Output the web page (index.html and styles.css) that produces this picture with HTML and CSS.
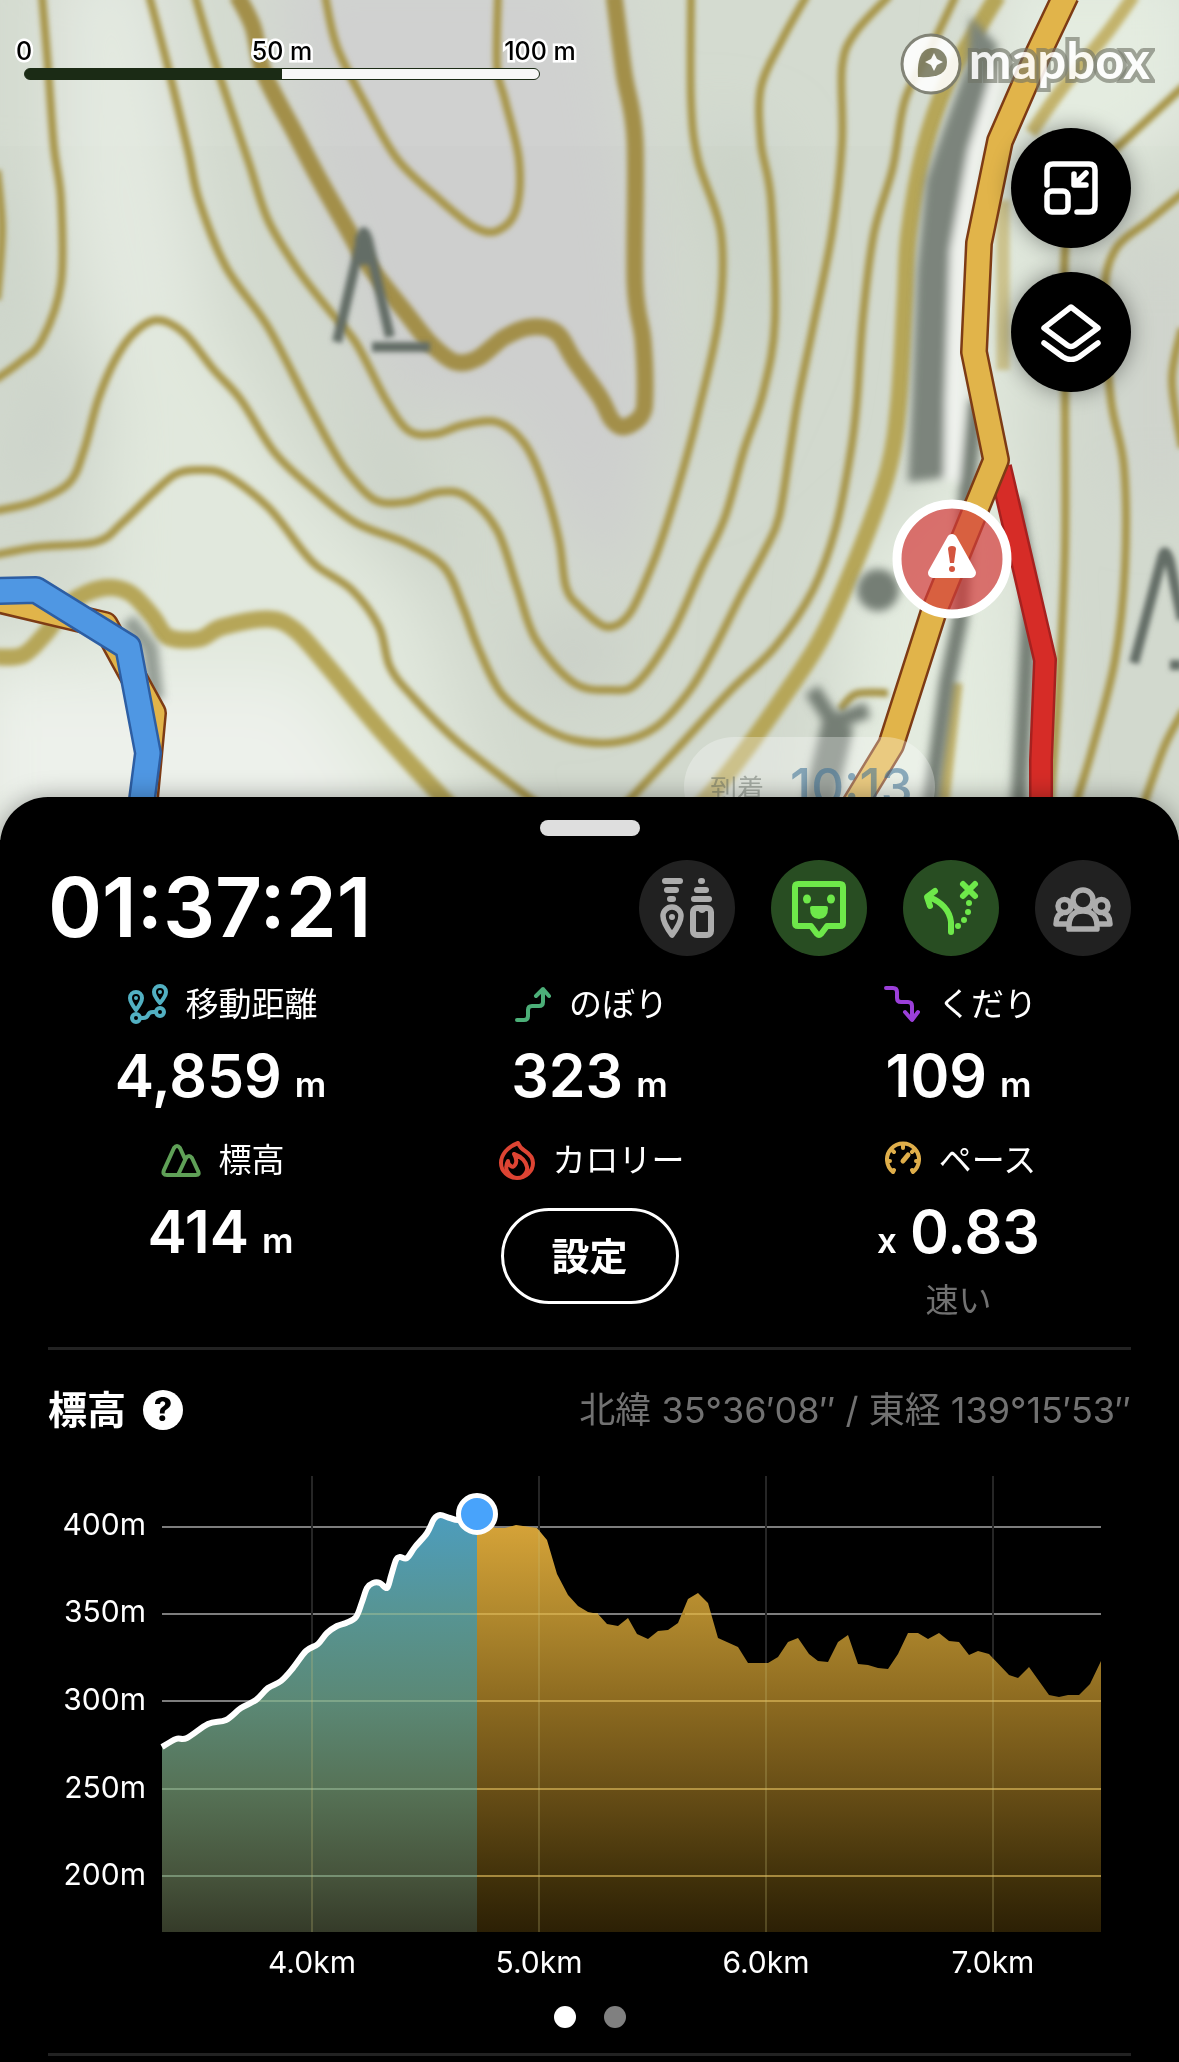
FILE: index.html
```html
<!DOCTYPE html>
<html lang="ja">
<head>
<meta charset="utf-8">
<meta name="viewport" content="width=device-width, initial-scale=1">
<title>活動記録</title>
<link rel="stylesheet" href="styles.css">
</head>
<body>
<main class="app">
  <section class="map" aria-label="地図">
    <svg class="map-art" viewBox="0 0 1179 840" preserveAspectRatio="xMidYMin slice" aria-hidden="true">
      <defs>
        <filter id="soft" x="-10%" y="-10%" width="120%" height="120%"><feGaussianBlur stdDeviation="2.500"/></filter>
        <filter id="softer" x="-10%" y="-10%" width="120%" height="120%"><feGaussianBlur stdDeviation="4"/></filter>
        <filter id="wash" x="-30%" y="-30%" width="160%" height="160%"><feGaussianBlur stdDeviation="32"/></filter>
      </defs>
      <rect width="1179" height="840" fill="#d2d9ce"/>
      <g filter="url(#wash)">
        <path d="M60 -40H150L190 200L230 420L110 420L60 200Z" fill="#e3e9e0"/>
        <path d="M-40 190H30V350L-40 400Z" fill="#cdd5ca"/>
        <path d="M110 340L200 300L300 480L420 600L500 860L-40 860L-40 640L100 620Z" fill="#e1e8dd"/>
        <path d="M-20 680H300L420 860H-20Z" fill="#edf1eb"/>
        <path d="M270 -40H600L650 260L660 420L620 600L560 520L500 420L380 400L300 160Z" fill="#cecfce"/>
        <path d="M30 400L90 330L100 420L60 480L-20 490Z" fill="#ccd3ca"/>
        <path d="M520 620L640 640L560 700Z" fill="#c6cbc4"/>
        <path d="M360 380L420 480L460 600L370 500Z" fill="#c9d0c6"/>
        <path d="M690 120L770 140L780 320L700 500L730 300Z" fill="#c9d1c6"/>
        <path d="M1000 -40H1200V120L1060 200L1010 400L1040 860H830L850 560L940 480L980 200Z" fill="#e3ebdf"/>
        <path d="M1120 240H1200V500H1120Z" fill="#cfd3cc"/>
      </g>
      <rect width="1179" height="146" fill="#fff" opacity=".06"/>
      <g class="contour" filter="url(#soft)">
        <path data-points="325,-5 337,47 367,107 398,160 440,200 474,227 497,231 516,210 519,160 505,100 497,67 498,-5"/>
        <path data-points="195,-5 209,43 230,107 249,163 268,220 298,270 329,310 356,343 386,400 409,431 436,434 463,425 497,422 524,443 543,483 559,540 566,587 580,607 607,627 630,613 653,563 668,520 683,470 698,413 719,317 721,233 698,160 691,100 691,-5"/>
        <path data-points="149,-5 168,67 188,150 199,200 226,267 268,327 306,400 329,443 348,473 375,500 406,502 440,492 467,497 497,530 517,587 536,640 574,683 611,690 637,683 672,633 702,567 725,517 744,450 763,393 775,320 771,200 761,143 761,87 782,40 807,-5"/>
        <path data-points="-5,511 34,502 69,483 84,450 98,400 115,360 134,333 157,320 184,333 214,370 241,400 275,453 314,490 356,523 406,543 444,567 463,607 478,647 501,693 536,723 574,740 618,742 656,727 690,690 715,647 740,597 765,550 779,517 790,450 798,400 813,327 832,233 842,143 842,67 855,33 890,-5"/>
        <path data-points="-5,555 38,547 96,542 122,523 153,493 176,474 199,470 226,475 268,507 302,550 318,567 352,590 379,627 390,667 413,697 459,743 540,806"/>
        <path data-points="620,810 676,750 729,692 775,647 813,590 836,527 851,450 857,400 863,317 874,233 893,167 905,100 930,50 956,-5"/>
        <path data-points="42,-5 48,67 54,147 61,200 61,283 42,340 20,362 -5,380"/>
        <path data-points="-3,170 2,230 -3,300"/>
        <path data-points="1184,86 1122,143 1080,180 1065,250 1065,400 1065,550 1058,700 1050,806"/>
        <path data-points="1184,192 1150,220 1115,250 1104,300 1111,400 1124,467 1125,567 1115,660 1092,750 1075,806"/>
        <path data-points="1182,328 1172,380 1182,448"/>
        <path data-points="1184,710 1165,745 1143,806"/>
        <path data-points="840,710 856,694 888,693"/>
      </g>
      <g class="index-contour" filter="url(#soft)">
        <path data-points="237,-5 253,27 264,73 295,133 318,177 348,230 367,263 406,313 430,343 455,362 478,358 505,337 532,327 557,333 574,360 600,397 612,420 624,427 641,416 645,395 643,340 635,283 635,140 624,73 614,-5"/>
        <path class="low" data-points="-5,657 23,655 46,633 70,603 103,588 130,593 153,617 168,637 199,639 222,627 268,619 295,630 325,663 383,733 450,806"/>
        <path class="low" data-points="700,806 733,767 786,693 824,633 863,543 889,467 899,400 905,300 909,233 924,150 947,83 980,25 998,-5"/>
        <path class="tan" data-points="1134,-5 1107,33 1061,90 1031,133"/>
        <path class="tan faint" d="M1003 200V370"/>
        <path class="tan" d="M956 683L943 800"/>
      </g>
      <g class="road" filter="url(#softer)">
        <path class="verge" d="M990 70L966 167L955 250L950 400L945 480"/>
        <path class="body" d="M970 16L998 46L986 90L968 150L950 250L945 400L944 478L908 482L912 400L917 270L926 180L943 130L968 62Z"/>
        <path class="narrow" d="M976 400L966 500L960 620L947 683L928 820"/>
        <path class="narrow" d="M1014 500L1030 590L1027 650L1018 820"/>
        <path class="narrow" d="M812 690L833 722L868 710"/>
        <path class="wide" d="M838 724L815 820"/>
        <path class="narrow faint" d="M128 620L150 648L156 700"/>
        <circle cx="878" cy="590" r="21"/>
      </g>
      <g class="tree" filter="url(#soft)">
        <path d="M337 342L361 240Q363 224 368 240L390 337M372 347H430"/>
        <path class="tip" d="M363 236V265"/>
        <path d="M1134 663L1162 558Q1165 545 1170 562L1182 620M1170 665H1182"/>
      </g>
      <g class="route">
        <path class="orange-edge" d="M0 600L105 625L153 713L142 830"/>
        <path class="orange" d="M0 600L105 625L153 713L142 830"/>
        <path class="red-edge" d="M1000 467L1045 660L1041 760V830"/>
        <path class="red" d="M1000 467L1045 660L1041 760V830"/>
        <path class="orange-edge" d="M1066 -5L1038 54L1000 141L979 243L974 352L996 460L933 614L891 745L838 832"/>
        <path class="orange" d="M1066 -5L1038 54L1000 141L979 243L974 352L996 460L933 614L891 745L838 832"/>
        <path class="blue-edge" d="M-5 591L36 590L128 647L148 753L138 830"/>
        <path class="blue" d="M-5 591L36 590L128 647L148 753L138 830"/>
      </g>
      <g>
        <circle cx="952" cy="559" r="55" fill="#d43c3c" fill-opacity=".7" stroke="#fff" stroke-width="9"/>
        <path d="M952 539L971 573H933Z" fill="#fff" stroke="#fff" stroke-width="10" stroke-linejoin="round"/>
        <path d="M948 549Q948 546 952 546T956 549L954 563H950Z" fill="#d4553f"/><circle cx="952" cy="569" r="3" fill="#d4553f"/>
      </g>
    </svg>
    <div class="scale">
      <div class="scale-labels"><span>0</span><span>50 m</span><span>100 m</span></div>
      <div class="scale-bar"></div>
    </div>
    <a class="mapbox" href="#" aria-label="mapbox">
      <svg viewBox="0 0 64 64" width="64" height="64" aria-hidden="true">
        <circle cx="32" cy="32" r="29" fill="#fff" stroke="#77786b" stroke-width="3"/>
        <path d="M19 45C18 25 23 16 34 16A14 14 0 0 1 48 30C48 42 38 46 19 45Z" fill="#7c7c62"/>
        <path d="M35 21L38 27L44 30L38 33L35 39L32 33L26 30L32 27Z" fill="#fff"/>
      </svg>
      <span>mapbox</span>
    </a>
    <div class="map-buttons">
      <button class="map-button" type="button" aria-label="縮小表示">
        <svg viewBox="0 0 60 60" width="60" height="60"><g fill="none" stroke="#fff" stroke-width="5.500" stroke-linecap="round" stroke-linejoin="round"><path d="M6 27V12Q6 6 12 6H48Q54 6 54 12V48Q54 54 48 54H36"/><rect x="6" y="33" width="21" height="21" rx="5"/><path d="M33 16V27H45M34 26L45 15"/></g></svg>
      </button>
      <button class="map-button" type="button" aria-label="地図の種類">
        <svg viewBox="0 0 60 60" width="60" height="60"><g fill="none" stroke="#fff" stroke-width="5.500" stroke-linecap="round" stroke-linejoin="round"><path d="M30 5L57 26L34 43Q30 46 26 43L3 26Z"/><path d="M3 41L22 55Q30 60 38 55L57 41"/></g></svg>
      </button>
    </div>
    <div class="arrival"><span>到着</span><strong>10:13</strong></div>
  </section>

  <section class="sheet">
    <div class="handle"></div>
    <header class="top-row">
      <h1 class="timer">01:37:21</h1>
      <div class="toggles">
        <button class="toggle" type="button" aria-label="位置共有">
          <svg viewBox="0 0 96 96"><g fill="none" stroke="currentColor" stroke-width="6" stroke-linecap="round" stroke-linejoin="round"><path d="M26 21H41M28 30H37M31 39H34M62 21H63M58 30H67M55 39H70"/><path d="M33 75Q24 63 24 56A9 9 0 0 1 42 56Q42 63 33 75Z" stroke-width="5.500"/><rect x="54" y="48" width="18" height="27" rx="4"/></g><circle cx="33" cy="57" r="3" fill="currentColor"/><path d="M59 50H67Q66 53 63 53T59 50Z" fill="currentColor"/></svg>
        </button>
        <button class="toggle on" type="button" aria-label="フィールドメモ">
          <svg viewBox="0 0 96 96"><path d="M27 24H69Q72 24 72 27V63Q72 66 69 66H56L50 74Q48 76 46 74L40 66H27Q24 66 24 63V27Q24 24 27 24Z" fill="none" stroke="currentColor" stroke-width="6" stroke-linejoin="round"/><ellipse cx="36" cy="39" rx="4" ry="4.500" fill="currentColor"/><ellipse cx="60" cy="39" rx="4" ry="4.500" fill="currentColor"/><path d="M41 46H55Q57 46 57 48Q57 59 48 59T39 48Q39 46 41 46Z" fill="currentColor"/></svg>
        </button>
        <button class="toggle on" type="button" aria-label="ルート外れ警告">
          <svg viewBox="0 0 96 96"><g fill="none" stroke="currentColor" stroke-width="6" stroke-linecap="round" stroke-linejoin="round"><path d="M48 72V62Q46 45 26 37M32 31L24 37L27 46"/><path d="M60 24L72 36M72 24L60 36"/></g><g fill="currentColor"><circle cx="66" cy="43" r="3"/><circle cx="65" cy="52" r="3"/><circle cx="61" cy="60" r="3"/><circle cx="55" cy="66" r="3"/></g></svg>
        </button>
        <button class="toggle" type="button" aria-label="グループ">
          <svg viewBox="0 0 96 96"><g fill="none" stroke="currentColor" stroke-width="5.500" stroke-linejoin="round"><circle cx="48" cy="40" r="10"/><circle cx="29.500" cy="46" r="6.500"/><circle cx="66.500" cy="46" r="6.500"/><path d="M34 69Q33 51 48 51T62 69Z"/><path d="M33 64H21Q21 54 28 53M63 64H75Q75 54 68 53"/></g></svg>
        </button>
      </div>
    </header>

    <dl class="metrics">
      <div class="metric">
        <dt><svg viewBox="0 0 40 40" width="40" height="40" fill="none" stroke="#52b0c2" stroke-width="4"><path d="M8 26Q2 18 2 14A6 6 0 0 1 14 14Q14 18 8 26ZM32 19Q26 12 26 8A6 6 0 0 1 38 8Q38 12 32 19Z" stroke-linejoin="round"/><circle cx="8" cy="34" r="4"/><circle cx="32" cy="28" r="4"/><path d="M12 34H15Q19 34 20 31T25 28H28"/><circle cx="8" cy="14" r="2" fill="#52b0c2" stroke="none"/><circle cx="32" cy="8" r="2" fill="#52b0c2" stroke="none"/></svg>移動距離</dt>
        <dd>4,859<small>m</small></dd>
      </div>
      <div class="metric">
        <dt><svg viewBox="0 0 36 40" width="36" height="40" fill="none" stroke="#4caf78" stroke-width="4" stroke-linecap="round" stroke-linejoin="round"><path d="M2 36H9Q13 36 13 32V26Q13 22 17 22H24Q28 22 28 18V5M21 12L28 5L34 12"/></svg>のぼり</dt>
        <dd>323<small>m</small></dd>
      </div>
      <div class="metric">
        <dt><svg viewBox="0 0 36 40" width="36" height="40" fill="none" stroke="#9b3fd9" stroke-width="4" stroke-linecap="round" stroke-linejoin="round"><path d="M2 4H9Q13 4 13 8V14Q13 18 17 18H24Q28 18 28 22V35M21 28L28 36L34 28"/></svg>くだり</dt>
        <dd>109<small>m</small></dd>
      </div>
      <div class="metric">
        <dt><svg viewBox="0 0 40 40" width="40" height="40" fill="none" stroke="#5fa057" stroke-width="4" stroke-linejoin="round" stroke-linecap="round"><path d="M6 35Q1 35 3 30L13 8Q16 4 19 8L24 19M6 35H35Q39 35 37 31L31 18Q28 14 25 18L17 35"/></svg>標高</dt>
        <dd>414<small>m</small></dd>
      </div>
      <div class="metric">
        <dt><svg viewBox="0 0 36 40" width="36" height="40" fill="none" stroke="#dd4433" stroke-width="4" stroke-linejoin="round" stroke-linecap="round"><path d="M19 3C8 7 2 15 2 23A16 15 0 0 0 34 23C34 16 29 13 26 11Q21 8 19 3Z"/><path d="M23 37Q29 32 28 27Q26 18 15 14Q19 21 16 25Q14 28 12 26Q9 25 9 21Q6 26 8 31Q10 35 14 37"/></svg>カロリー</dt>
        <dd><button class="setup" type="button">設定</button></dd>
      </div>
      <div class="metric">
        <dt><svg viewBox="0 0 36 40" width="36" height="40" fill="none" stroke="#dfae4a" stroke-width="4" stroke-linecap="round" stroke-linejoin="round"><path d="M8 32A16 16 0 1 1 28 32L27 30M8 32L9 30M3 21H5M33 21H31M18 6V8M8 11L9 12M28 11L27 12"/><path d="M18 21L23 15" stroke-width="5"/></svg>ペース</dt>
        <dd><small>x</small>0.83</dd>
        <dd class="note">速い</dd>
      </div>
    </dl>

    <section class="elevation">
      <header class="elevation-head">
        <h2>標高</h2>
        <button class="help" type="button" aria-label="ヘルプ">?</button>
        <p>北緯 35°36′08″ / 東経 139°15′53″</p>
      </header>
      <div class="chart">
        <div class="y-axis"><span>400m</span><span>350m</span><span>300m</span><span>250m</span><span>200m</span></div>
        <div class="plot">
          <svg viewBox="0 0 939 456" preserveAspectRatio="none" role="img" aria-label="標高グラフ">
            <defs>
              <linearGradient id="done" gradientUnits="userSpaceOnUse" x1="0" y1="40" x2="0" y2="456"><stop offset="0" stop-color="#4d9dbd"/><stop offset=".24" stop-color="#579492"/><stop offset=".45" stop-color="#5b8875"/><stop offset=".66" stop-color="#567256"/><stop offset=".87" stop-color="#46533b"/><stop offset="1" stop-color="#353b29"/></linearGradient>
              <linearGradient id="ahead" gradientUnits="userSpaceOnUse" x1="0" y1="40" x2="0" y2="456"><stop offset="0" stop-color="#d8a539"/><stop offset=".24" stop-color="#b0882d"/><stop offset=".45" stop-color="#8c6a20"/><stop offset=".66" stop-color="#684e16"/><stop offset=".87" stop-color="#41310a"/><stop offset="1" stop-color="#2c2005"/></linearGradient>
            </defs>
            <path class="rows" d="M0 51H939M0 138H939M0 225H939"/>
            <path class="cols" d="M150 0V456M377 0V456M604 0V456M831 0V456"/>
            <path fill="url(#done)" d="M0 271L14 263H25L46 248L64 244L79 232L94 224L106 212L119 205L131 192L144 175L156 168L165 157L175 150L184 147L194 141L200 126L205 112L211 107H218L225 113L229 100L234 84L238 81L245 83L253 71L265 57L272 43L278 39L288 42L297 44L315 40V456H0Z"/>
            <path fill="url(#ahead)" d="M315 44L333 52H343L354 49L375 52L385 64L395 98L406 119L416 130L426 136L436 138L445 148L456 150L466 142L475 158L486 163L496 155L506 154L516 147L526 123L536 117L546 127L556 162L576 171L586 187H606L616 181L626 166L636 162L647 178L656 185L666 186L676 166L686 159L696 188L706 189L716 192L726 193L736 178L746 157H756L766 163L777 157L787 165L797 166L807 179L816 175L827 178L847 199L856 202L867 191L887 219L897 221L906 219H917L928 208L939 185V456H315Z"/>
            <path class="rows on-teal" d="M195 138H315M90 225H315M0 313H315M0 400H315"/>
            <path class="rows on-gold" d="M315 138H436M523 138H549M315 225H939M315 313H939M315 400H939"/>
            <path class="cols on-fill" d="M150 172V456M377 54V456M604 187V456M831 183V456"/>
            <path class="track" data-points="0,271 14,263 25,262 46,248 64,244 79,232 94,224 106,212 119,205 131,192 144,175 156,168 165,157 175,150 184,147 194,141 200,126 205,112 211,107 218,107 225,112 229,100 234,84 238,81 245,82 253,71 265,57 272,43 278,39 288,42 297,44 315,40"/>
          </svg>
          <i class="marker"></i>
        </div>
        <div class="x-axis"><span style="left:15.970%">4.0km</span><span style="left:40.150%">5.0km</span><span style="left:64.320%">6.0km</span><span style="left:88.500%">7.0km</span></div>
      </div>
      <div class="pages"><button type="button" class="current" aria-label="1ページ目"></button><button type="button" aria-label="2ページ目"></button></div>
    </section>
  </section>
</main>
<script src="curves.js"></script>
</body>
</html>
```
FILE: curves.js
```js
// Draws a smooth curve through the points listed on each path.
document.querySelectorAll('path[data-points]').forEach(function (path) {
  var p = path.dataset.points.split(' ').map(function (s) { return s.split(',').map(Number); });
  var d = 'M' + p[0];
  for (var i = 0; i < p.length - 1; i++) {
    var a = p[i - 1] || p[i], b = p[i], c = p[i + 1], e = p[i + 2] || c;
    d += 'C' + [b[0] + (c[0] - a[0]) / 6, b[1] + (c[1] - a[1]) / 6,
                c[0] - (e[0] - b[0]) / 6, c[1] - (e[1] - b[1]) / 6, c[0], c[1]];
  }
  path.setAttribute('d', d);
});
```
FILE: styles.css
```css
* { box-sizing: border-box; }
body {
  margin: 0;
  background: #000;
  color: #fff;
  font-family: Inter, "Noto Sans CJK JP", sans-serif;
}
button { font: inherit; color: inherit; border: 0; padding: 0; cursor: pointer; }
h1, h2, p, dl, dd { margin: 0; }
.app { display: flex; flex-direction: column; min-height: 100vh; }

/* map */
.map { position: relative; aspect-ratio: 1179 / 840; overflow: hidden; }
.map-art { display: block; width: 100%; height: 100%; }
.map-art path { stroke-linejoin: round; }
.contour path { fill: none; stroke: #a7954a; stroke-width: 8; }
.index-contour path { fill: none; stroke: #a38f48; stroke-width: 17; }
.index-contour .low { stroke: #b6a658; }
.index-contour .tan { stroke: #c3b36c; stroke-width: 13; }
.index-contour .faint { opacity: .7; }
.road path { fill: none; stroke: #747e75; }
.road circle { fill: #747e75; }
.road .body { fill: #7b847b; stroke: none; }
.road .verge { stroke: #eef1ec; stroke-width: 30; }
.road .narrow { stroke-width: 16; }
.road .wide { stroke-width: 32; }
.road .faint { opacity: .7; }
.tree path { fill: none; stroke: #636d66; stroke-width: 10; }
.tree .tip { stroke-width: 16; }
.route path { fill: none; }
.route .orange-edge { stroke: #7d3b15; stroke-width: 28; }
.route .orange { stroke: #e1b44a; stroke-width: 23; }
.route .red-edge { stroke: #a6211f; stroke-width: 24; }
.route .red { stroke: #d62c27; stroke-width: 19; }
.route .blue-edge { stroke: #2d5ea3; stroke-width: 28; }
.route .blue { stroke: #4f97e3; stroke-width: 23; }

.scale { position: absolute; top: 36px; left: 24px; width: 516px; }
.scale-labels { display: flex; justify-content: space-between; height: 32px; }
.scale-labels span {
  display: flex; justify-content: center; width: 0; white-space: nowrap;
  color: #000; font-size: 25px; line-height: 30px; font-weight: 500;
  -webkit-text-stroke: 5px #fff; paint-order: stroke fill;
}
.scale-bar {
  height: 12px; border: 1px solid #1b2b15; border-radius: 6px;
  background: linear-gradient(90deg, #1b2b15 50%, #f7f7f7 50%);
}
.mapbox {
  position: absolute; top: 30px; right: 29px; display: flex; align-items: center; gap: 6px;
  color: #fff; text-decoration: none; opacity: .88;
}
.mapbox span {
  font: 700 51px/60px Lato, sans-serif; padding-bottom: 8px;
  -webkit-text-stroke: 8px rgba(112, 116, 102, .7); paint-order: stroke fill;
}
.map-buttons { position: absolute; top: 128px; right: 48px; display: flex; flex-direction: column; gap: 24px; }
.map-button {
  display: grid; place-items: center; width: 120px; height: 120px; border-radius: 50%;
  background: #000; box-shadow: 0 0 22px rgba(0, 0, 0, .4);
}
.arrival {
  position: absolute; top: 737px; left: 684px; display: flex; align-items: center; gap: 26px;
  height: 100px; padding: 0 22px 0 26px; border-radius: 50px; background: rgba(255, 255, 255, .3);
  white-space: nowrap;
}
.arrival span { color: rgba(90, 100, 90, .45); font-size: 27px; }
.arrival strong { color: rgba(58, 112, 150, .55); font-size: 51px; font-weight: 500; line-height: 60px; }

/* sheet */
.sheet {
  position: relative; flex: 1; margin-top: -43px; padding: 23px 48px 5px;
  border-radius: 48px 48px 0 0; background: #000; box-shadow: 0 0 24px rgba(0, 0, 0, .35);
}
.handle { width: 100px; height: 16px; margin: 0 auto 24px; border-radius: 8px; background: #dedede; }
.top-row { display: flex; justify-content: space-between; align-items: center; }
.timer { font-size: 82px; line-height: 96px; font-weight: 600; }
.toggles { display: flex; gap: 36px; }
.toggle { width: 96px; height: 96px; border-radius: 50%; background: #212121; color: #adadad; }
.toggle.on { background: #284d22; color: #6ee84a; }
.toggle svg { display: block; width: 96px; height: 96px; }

.metrics { display: grid; grid-template-columns: repeat(3, 1fr); gap: 32px 24px; padding: 28px 0 27px; }
.metric { display: flex; flex-direction: column; align-items: center; }
.metric dt {
  display: flex; align-items: center; gap: 18px; height: 40px; padding-left: 4px;
  font-size: 33px; line-height: 40px;
}
.metric dd {
  display: flex; align-items: baseline; gap: 13px; margin-top: 20px;
  font-size: 59px; line-height: 64px; font-weight: 600;
}
.metric small { font-size: 35px; line-height: 36px; }
.metric .note { margin-top: 16px; color: #717171; font-size: 33px; line-height: 40px; font-weight: 400; }
.setup {
  width: 178px; height: 96px; margin-top: 8px; border: 3px solid #fff; border-radius: 48px;
  background: transparent; font-size: 38px; line-height: 40px; font-weight: 700;
}

.elevation { border-top: 3px solid #222; border-bottom: 3px solid #222; padding: 36px 0 25px; }
.elevation-head { display: flex; align-items: center; height: 48px; }
.elevation-head h2 { font-size: 39px; line-height: 48px; font-weight: 700; }
.help {
  width: 40px; height: 40px; margin-left: 17px; border-radius: 50%;
  background: #fff; color: #000; font-size: 32px; line-height: 40px; font-weight: 800;
}
.elevation-head p { margin-left: auto; color: #717171; font-size: 36px; line-height: 48px; }
.chart {
  display: grid; grid-template-columns: 98px 1fr; column-gap: 16px; row-gap: 10px;
  padding: 42px 30px 0 0; font-size: 30px;
}
.y-axis { display: grid; grid-template-rows: repeat(5, 1fr); padding: 4px 0 14px; text-align: right; align-items: center; }
.plot { position: relative; height: 456px; }
.plot svg { display: block; width: 100%; height: 100%; overflow: visible; }
.rows, .cols { fill: none; stroke-width: 2; }
.rows { stroke: #7d7d7d; }
.rows.on-teal { stroke: rgba(150, 185, 150, .6); }
.rows.on-gold { stroke: rgba(220, 185, 90, .65); }
.cols { stroke: #262626; }
.cols.on-fill { stroke: rgba(200, 190, 120, .25); }
.track { fill: none; stroke: #fff; stroke-width: 6; stroke-linejoin: round; }
.marker {
  position: absolute; left: 33.5%; top: 38px; width: 42px; height: 42px; margin: -21px;
  border: 5px solid #fff; border-radius: 50%; background: #48a3fb;
}
.x-axis { grid-column: 2; position: relative; height: 40px; line-height: 40px; }
.x-axis span { position: absolute; transform: translateX(-50%); }
.pages { display: flex; justify-content: center; gap: 28px; margin-top: 24px; }
.pages button { width: 22px; height: 22px; border-radius: 50%; background: #808080; }
.pages .current { background: #fff; }
```
